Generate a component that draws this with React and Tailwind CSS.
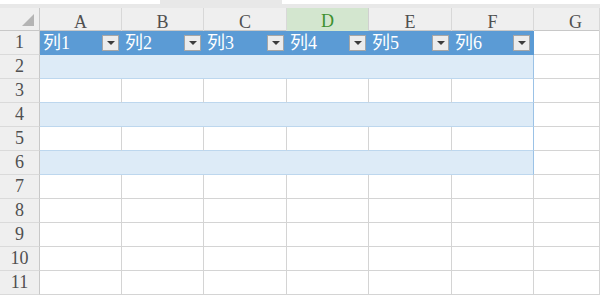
import React from "react";

const COLS = ["A", "B", "C", "D", "E", "F"];
const ROWS = [1, 2, 3, 4, 5, 6, 7, 8, 9, 10, 11];
const GRID = "grid grid-cols-[40px_82px_82px_83px_82px_83px_82px_1fr]";
const FONT = { fontFamily: '"Liberation Serif", "Noto Sans CJK SC", serif' };

function Dropdown() {
  return (
    <div className="absolute right-[3px] top-1/2 -translate-y-1/2 w-[17px] h-[16px] border border-[#a6a6a6] bg-[#ececec] flex items-center justify-center">
      <div className="w-0 h-0 border-l-[4px] border-r-[4px] border-t-[4px] border-l-transparent border-r-transparent border-t-[#3c3c3c]" />
    </div>
  );
}

function Cell({ r, ci }) {
  const last = ci === 5;
  if (r === 1) {
    return (
      <div className={`relative h-[24px] bg-[#5b9bd5] border-b border-[#5b9bd5] ${last ? "border-r border-r-[#5b9bd5]" : ""} flex items-center pl-[3px] text-white text-[18px]`}>
        <span className="leading-none">列{ci + 1}</span>
        <Dropdown />
      </div>
    );
  }
  if (r <= 6) {
    const band = r % 2 === 0;
    if (band) {
      return (
        <div className={`h-[24px] bg-[#ddebf7] border-b border-b-[#bdd7ee] ${last ? "border-r border-r-[#9bc2e6]" : ""}`} />
      );
    }
    return (
      <div className={`h-[24px] bg-white border-b border-b-[#bdd7ee] border-r ${last ? "border-r-[#9bc2e6]" : "border-r-[#d4d4d4]"}`} />
    );
  }
  return <div className="h-[24px] bg-white border-b border-r border-[#d4d4d4]" />;
}

export default function App() {
  return (
    <div className="w-[600px] h-[299px] overflow-hidden bg-white" style={FONT}>
      <div className="h-[8px] bg-[#e8e8e8] flex">
        <div className="w-[160px] h-[4px] bg-white" />
        <div className="w-[122px]" />
        <div className="flex-1 h-[4px] bg-white" />
      </div>
      <div className={`${GRID} h-[23px] bg-[#efefef] border-b border-[#c8c8c8] text-[18px] text-[#505050]`}>
        <div className="relative border-r border-[#c8c8c8]">
          <div className="absolute left-[22px] top-[6px] w-0 h-0 border-l-[12px] border-b-[12px] border-l-transparent border-b-[#b4b4b4]" />
        </div>
        {COLS.map((c) =>
          c === "D" ? (
            <div key={c} className="flex items-center justify-center bg-[#d3e6cf] border-r border-[#d0d0d0] border-b-2 border-b-[#4a9a32] text-[#3e9030] -mb-px">
              {c}
            </div>
          ) : (
            <div key={c} className="flex items-center justify-center border-r border-[#d8d8d8]">
              {c}
            </div>
          )
        )}
        <div className="flex items-center justify-start pl-[35px] border-r border-[#d8d8d8]">G</div>
      </div>
      {ROWS.map((r) => (
        <div key={r} className={GRID}>
          <div className="h-[24px] bg-[#efefef] border-r border-r-[#c8c8c8] border-b border-b-[#dadada] flex items-center justify-center text-[18px] text-[#505050]">
            {r}
          </div>
          {COLS.map((c, ci) => (
            <Cell key={c} r={r} ci={ci} />
          ))}
          <div className="h-[24px] bg-white border-b border-r border-[#d4d4d4]" />
        </div>
      ))}
    </div>
  );
}
